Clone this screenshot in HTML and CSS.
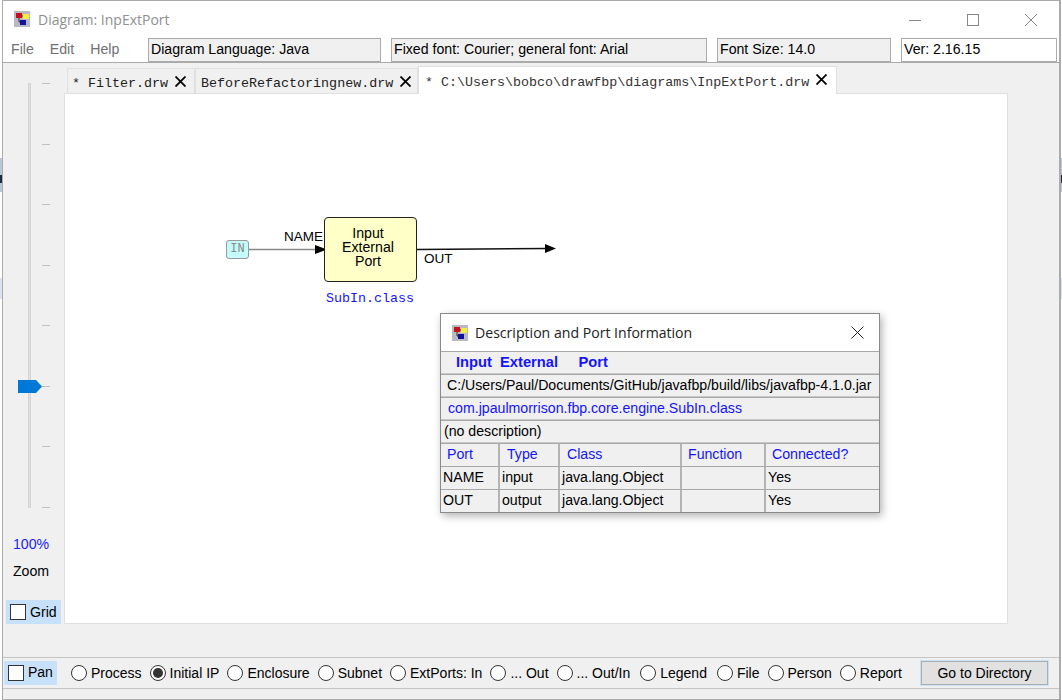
FILE: index.html
```html
<!DOCTYPE html>
<html lang="en">
<head>
    <meta charset="UTF-8">
    <title>Diagram: InpExtPort</title>
    <link rel="stylesheet" href="styles.css">
</head>
<body>

<div class="window">

    <!-- title bar -->
    <div class="titlebar">
        <svg class="app-icon" viewBox="0 0 16 16">
            <rect width="16" height="16" fill="#b9b9c4"/>
            <rect x="2" y="2" width="6" height="5" fill="#c8101c"/>
            <rect x="9" y="3" width="6" height="5" fill="#f5ee3a"/>
            <rect x="6" y="9" width="6" height="5" fill="#12129a"/>
            <path d="M5 7v4h1M8 5h1" stroke="#333" fill="none"/>
        </svg>
        <span class="title-text">Diagram: InpExtPort</span>
        <div class="win-buttons">
            <svg width="12" height="12" viewBox="0 0 12 12"><path d="M0 6.500h12" stroke="#888"/></svg>
            <svg width="12" height="12" viewBox="0 0 12 12"><rect x=".5" y=".5" width="11" height="11" fill="none" stroke="#888"/></svg>
            <svg width="12" height="12" viewBox="0 0 12 12"><path d="M0 0l12 12M12 0L0 12" stroke="#888"/></svg>
        </div>
    </div>

    <!-- menu and info boxes -->
    <div class="menubar">
        <div class="menu">
            <span>File</span>
            <span>Edit</span>
            <span>Help</span>
        </div>
        <div class="info info-lang">Diagram Language: Java</div>
        <div class="info info-font">Fixed font: Courier; general font: Arial</div>
        <div class="info info-size">Font Size: 14.0</div>
        <div class="info info-ver">Ver: 2.16.15</div>
    </div>

    <div class="main">
        <div class="sidebar">
            <div class="slider">
                <div class="slider-track"></div>
                <div class="ticks">
                    <i></i><i></i><i></i><i></i><i></i><i></i><i></i><i></i>
                </div>
                <svg class="slider-thumb" width="24" height="13" viewBox="0 0 24 13"><path d="M0 0h18l6 6.500-6 6.500H0z" fill="#0078d7"/></svg>
            </div>
            <div class="zoom-pct">100%</div>
            <div class="zoom-label">Zoom</div>
            <div class="check-box grid-check"><span class="box"></span>Grid</div>
        </div>

        <div class="workspace">
            <div class="tabs">
                <div class="tab tab-filter">
                    <span class="tab-name">* Filter.drw</span>
                    <svg class="tab-x" width="11" height="11" viewBox="0 0 11 11"><path d="M.5.500l10 10M10.500.500l-10 10" stroke="#000" stroke-width="1.800"/></svg>
                </div>
                <div class="tab tab-before">
                    <span class="tab-name">BeforeRefactoringnew.drw</span>
                    <svg class="tab-x" width="11" height="11" viewBox="0 0 11 11"><path d="M.5.500l10 10M10.500.500l-10 10" stroke="#000" stroke-width="1.800"/></svg>
                </div>
                <div class="tab tab-active">
                    <span class="tab-name">* C:\Users\bobco\drawfbp\diagrams\InpExtPort.drw</span>
                    <svg class="tab-x" width="11" height="11" viewBox="0 0 11 11"><path d="M.5.500l10 10M10.500.500l-10 10" stroke="#000" stroke-width="1.800"/></svg>
                </div>
            </div>
            <div class="canvas">
                <svg class="wires" width="942" height="530" viewBox="0 0 942 530">
                    <path d="M184 155.500H252" stroke="#888" stroke-width="1.500" fill="none"/>
                    <path d="M250 151l12 4.500-12 4.500z" fill="#000"/>
                    <path d="M352 155.500L482 154.500" stroke="#111" stroke-width="1.500" fill="none"/>
                    <path d="M480 150l11 4.500-11 4.500z" fill="#000"/>
                </svg>
                <div class="node-in">IN</div>
                <div class="port-label label-name">NAME</div>
                <div class="block">Input<br>External<br>Port</div>
                <div class="port-label label-out">OUT</div>
                <div class="block-class">SubIn.class</div>
            </div>
        </div>
    </div>

    <!-- bottom radio row -->
    <div class="toolbar">
        <div class="check-box pan-check"><span class="box"></span><span class="raised">Pan</span></div>
        <label class="radio"><span class="dot"></span>Process</label>
        <label class="radio"><span class="dot on"></span>Initial IP</label>
        <label class="radio"><span class="dot"></span>Enclosure</label>
        <label class="radio"><span class="dot"></span>Subnet</label>
        <label class="radio"><span class="dot"></span>ExtPorts: In</label>
        <label class="radio"><span class="dot"></span>... Out</label>
        <label class="radio wide"><span class="dot"></span>... Out/In</label>
        <label class="radio wide"><span class="dot"></span>Legend</label>
        <label class="radio"><span class="dot"></span>File</label>
        <label class="radio"><span class="dot"></span>Person</label>
        <label class="radio"><span class="dot"></span>Report</label>
        <button class="go-btn">Go to Directory</button>
    </div>
    <div class="statusbar"></div>

    <!-- popup -->
    <div class="dialog">
        <div class="dialog-title">
            <svg class="app-icon" viewBox="0 0 16 16">
                <rect width="16" height="16" fill="#b9b9c4"/>
                <rect x="2" y="2" width="6" height="5" fill="#c8101c"/>
                <rect x="9" y="3" width="6" height="5" fill="#f5ee3a"/>
                <rect x="6" y="9" width="6" height="5" fill="#12129a"/>
                <path d="M5 7v4h1M8 5h1" stroke="#333" fill="none"/>
            </svg>
            <span>Description and Port Information</span>
            <svg class="dialog-x" width="13" height="13" viewBox="0 0 13 13"><path d="M.5.500l12 12M12.500.500l-12 12" stroke="#222"/></svg>
        </div>
        <div class="dialog-row row-head">Input&nbsp; External &nbsp; &nbsp; Port</div>
        <div class="dialog-row row-path">C:/Users/Paul/Documents/GitHub/javafbp/build/libs/javafbp-4.1.0.jar</div>
        <div class="dialog-row row-class">com.jpaulmorrison.fbp.core.engine.SubIn.class</div>
        <div class="dialog-row row-desc">(no description)</div>
        <div class="port-grid">
            <div class="th th-port">Port</div><div class="th th-type">Type</div><div class="th th-class">Class</div><div class="th th-func">Function</div><div class="th th-conn">Connected?</div>
            <div>NAME</div><div>input</div><div>java.lang.Object</div><div></div><div>Yes</div>
            <div>OUT</div><div>output</div><div>java.lang.Object</div><div></div><div>Yes</div>
        </div>
    </div>
</div>

</body>
</html>
```

FILE: styles.css
```css
* {
    box-sizing: border-box;
}
html, body {
    margin: 0;
    height: 100%;
    overflow: hidden;
}
body {
    font-family: "Liberation Sans", Arial, sans-serif;
    font-size: 14.150px;
    color: #000;
    /* desktop showing through beside the window */
    background: linear-gradient(to bottom,
        #fff 158px,
        #b8c6d8 158px, #b8c6d8 175px,
        #1c2a44 175px, #1c2a44 183px,
        #b8c6d8 183px, #b8c6d8 192px,
        #fff 192px, #fff 278px,
        #d8e2f0 278px, #d8e2f0 299px,
        #fff 299px);
    padding-left: 2px;
    padding-right: 1px;
}
.window {
    position: relative;
    width: 1059px;
    height: 700px;
    border: 2px solid #ababab;
    border-width: 1px 2px 1px 1px;
    background: #f0f0f0;
    display: flex;
    flex-direction: column;
}
.titlebar {
    height: 36px;
    background: #fff;
    display: flex;
    align-items: center;
    padding-left: 11px;
}
.app-icon {
    width: 16px;
    height: 16px;
    flex: none;
}
.title-text {
    margin-left: 8px;
    font-family: "Open Sans", "Liberation Sans", sans-serif;
    font-size: 14px;
    color: #8f8f8f;
}
.win-buttons {
    margin-left: auto;
    display: flex;
    gap: 46px;
    padding-right: 22px;
    padding-top: 1px;
}
.menubar {
    height: 26px;
    background: #fff;
    border-bottom: 1px solid #ababab;
    display: flex;
    align-items: flex-start;
    padding-top: 1px;
    padding-left: 8px;
}
.menu {
    width: 137px;
    display: flex;
    gap: 16px;
    padding-top: 3px;
    color: #707070;
}
.info {
    height: 24px;
    background: #f0f0f0;
    border: 1px solid #ababab;
    padding: 2px 2px 0;
    white-space: nowrap;
}
.info-lang {
    width: 233px;
}
.info-font {
    width: 316px;
    margin-left: 10px;
}
.info-size {
    width: 174px;
    margin-left: 10px;
}
.info-ver {
    width: 156px;
    margin-left: 10px;
    background: #fff;
}
.main {
    flex: 1;
    display: flex;
    min-height: 0;
}
.sidebar {
    width: 61px;
    flex: none;
    position: relative;
}
.slider {
    position: relative;
    height: 457px;
    margin-top: 20px;
}
.slider-track {
    position: absolute;
    left: 25px;
    top: 0;
    width: 3px;
    height: 425px;
    background: #e0e0e0;
    border: 1px solid #d4d4d4;
}
.ticks {
    position: absolute;
    left: 39px;
    top: 0;
    height: 425px;
    width: 8px;
    display: flex;
    flex-direction: column;
    justify-content: space-between;
}
.ticks i {
    display: block;
    height: 1px;
    background: #c0c0c0;
}
.slider-thumb {
    position: absolute;
    left: 15px;
    top: 297px;
}
.zoom-pct {
    color: #1a1aff;
    text-align: center;
    margin-top: -4px;
    padding-right: 5px;
}
.zoom-label {
    text-align: center;
    margin-top: 11px;
    padding-right: 5px;
}
.check-box {
    display: flex;
    align-items: center;
    gap: 4px;
    background: #c8e1fb;
    height: 24px;
}
.box {
    width: 16px;
    height: 16px;
    background: #fff;
    border: 1px solid #333;
    flex: none;
}
.grid-check {
    width: 55px;
    margin: 21px 0 0 3px;
    padding-left: 4px;
}
.workspace {
    flex: 1;
    min-width: 0;
    padding-top: 3px;
}
.tabs {
    display: flex;
    height: 28px;
    margin-left: 3px;
    align-items: flex-end;
}
.tab {
    height: 26px;
    background: #f0f0f0;
    border: 1px solid #e0e0e0;
    border-bottom: none;
    display: flex;
    align-items: center;
    font-family: "Liberation Mono", "Courier New", monospace;
    font-size: 13.350px;
    color: #202020;
    padding-left: 4px;
    padding-top: 4px;
    white-space: nowrap;
}
.tab-x {
    margin-left: 7px;
    margin-top: -5px;
}
.tab-filter {
    width: 128px;
}
.tab-before {
    width: 223px;
    padding-left: 5px;
}
.tab-active {
    width: 419px;
    height: 28px;
    background: #fff;
    position: relative;
    z-index: 1;
    padding-left: 6px;
    padding-top: 3px;
    color: #333;
}
.canvas {
    position: relative;
    width: 944px;
    height: 531px;
    margin-top: -1px;
    background: #fff;
    border: 1px solid #e0e0e0;
}
.wires {
    position: absolute;
    left: 0;
    top: 0;
}
.node-in {
    position: absolute;
    left: 161px;
    top: 146px;
    width: 23px;
    height: 19px;
    background: #c4fbfb;
    border: 1px solid #999;
    border-radius: 3px;
    font-family: "Liberation Mono", monospace;
    font-size: 12px;
    color: #888;
    text-align: center;
    line-height: 17px;
}
.block {
    position: absolute;
    left: 259px;
    top: 123px;
    width: 93px;
    height: 65px;
    background: #ffffc8;
    border: 1px solid #222;
    border-radius: 4px;
    text-align: center;
    line-height: 14px;
    padding-top: 8px;
    padding-right: 5px;
}
.port-label {
    position: absolute;
    font-size: 13.500px;
}
.label-name {
    left: 219px;
    top: 135px;
}
.label-out {
    left: 359px;
    top: 157px;
}
.block-class {
    position: absolute;
    left: 261px;
    top: 197px;
    font-family: "Liberation Mono", monospace;
    font-size: 13.350px;
    color: #1414ff;
}
.toolbar {
    height: 32px;
    margin-top: 2px;
    border-top: 1px solid #c4c4c4;
    border-bottom: 1px solid #c4c4c4;
    display: flex;
    align-items: center;
    padding-left: 1px;
    font-size: 14px;
}
.pan-check {
    width: 53px;
    padding-left: 4px;
    margin-right: 14px;
}
.raised {
    margin-top: -2px;
}
.radio {
    display: flex;
    align-items: center;
    gap: 4px;
    margin-right: 8px;
}
.radio.wide {
    margin-right: 10px;
}
.dot {
    width: 16px;
    height: 16px;
    border-radius: 50%;
    background: #fff;
    border: 1px solid #333;
    position: relative;
}
.dot.on::after {
    content: "";
    position: absolute;
    left: 2px;
    top: 2px;
    width: 10px;
    height: 10px;
    border-radius: 50%;
    background: #333;
}
.go-btn {
    margin-left: auto;
    margin-right: 11px;
    width: 127px;
    height: 24px;
    font: inherit;
    background: #e1e1e1;
    border: 1px solid #adadad;
    outline: 1px solid #c8e1fb;
    padding: 0;
}
.statusbar {
    height: 10px;
}
.dialog {
    position: absolute;
    left: 437px;
    top: 312px;
    width: 440px;
    height: 200px;
    background: #f0f0f0;
    border: 1px solid #8a8a8a;
    box-shadow: 2px 3px 8px rgba(0, 0, 0, 0.3);
    display: flex;
    flex-direction: column;
}
.dialog-title {
    height: 37px;
    background: #fff;
    display: flex;
    align-items: center;
    padding-left: 11px;
    font-family: "Open Sans", "Liberation Sans", sans-serif;
    font-size: 14.100px;
    color: #222;
    gap: 7px;
}
.dialog-x {
    margin-left: auto;
    margin-right: 15px;
}
.dialog-row {
    height: 23px;
    border-top: 1px solid #a8a8a8;
    border-bottom: 1px solid #c8c8c8;
    line-height: 21px;
    white-space: nowrap;
}
.row-head {
    color: #1414ff;
    font-weight: bold;
    font-size: 14.700px;
    padding-left: 15px;
}
.row-path {
    padding-left: 6px;
}
.row-class {
    color: #1414ff;
    padding-left: 7px;
}
.row-desc {
    padding-left: 3px;
}
.port-grid {
    display: grid;
    grid-template-columns: 59px 60px 122px 84px 1fr;
    grid-auto-rows: 23px;
}
.port-grid div {
    border-top: 1px solid #a8a8a8;
    border-right: 2px solid #b4b4b4;
    line-height: 21px;
    padding-left: 2px;
}
.port-grid div:nth-child(5n) {
    border-right: none;
}
.port-grid .th {
    color: #1414ff;
}
.port-grid .th-port {
    padding-left: 6px;
}
.port-grid .th-type {
    padding-left: 7px;
}
.port-grid .th-class {
    padding-left: 7px;
}
.port-grid .th-func {
    padding-left: 6px;
}
.port-grid .th-conn {
    padding-left: 6px;
}
```
